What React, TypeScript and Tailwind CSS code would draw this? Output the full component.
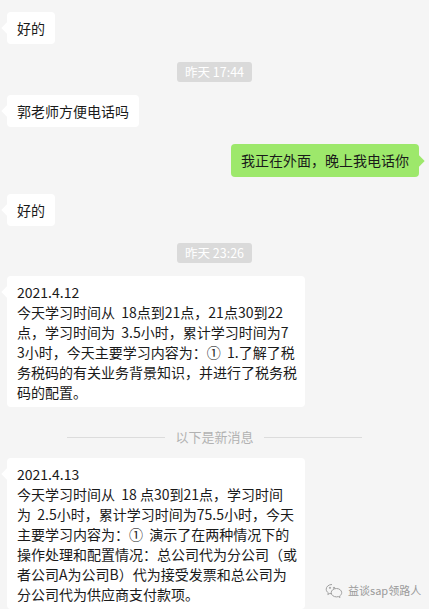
import React from "react";

const font = { fontFamily: '"Noto Sans CJK SC", "Noto Sans", sans-serif' };

function LeftBubble({ children, arrowTop = 12, className = "" }: { children: React.ReactNode; arrowTop?: number; className?: string }) {
  return (
    <div className={"relative self-start ml-[7px] bg-white rounded-[4px] text-[14px] text-[#1a1a1a] " + className}>
      <span
        className="absolute left-[-4px] w-[8px] h-[8px] bg-white rotate-45"
        style={{ top: arrowTop }}
      />
      <div className="relative">{children}</div>
    </div>
  );
}

function Stamp({ text, className = "" }: { text: string; className?: string }) {
  return (
    <div className={"self-center h-[20px] px-[8px] rounded-[3px] bg-[#dadada] text-white text-[12.5px] leading-[20px] " + className}>
      {text}
    </div>
  );
}

export default function App() {
  const msg1 = [
    "2021.4.12",
    "今天学习时间从  18点到21点，21点30到22",
    "点，学习时间为  3.5小时，累计学习时间为7",
    "3小时，今天主要学习内容为：①  1.了解了税",
    "务税码的有关业务背景知识，并进行了税务税",
    "码的配置。",
  ];
  const msg2 = [
    "2021.4.13",
    "今天学习时间从  18 点30到21点，学习时间",
    "为  2.5小时，累计学习时间为75.5小时，今天",
    "主要学习内容为：①  演示了在两种情况下的",
    "操作处理和配置情况：总公司代为分公司（或",
    "者公司A为公司B）代为接受发票和总公司为",
    "分公司代为供应商支付款项。",
  ];
  return (
    <div className="relative w-[429px] h-[609px] overflow-hidden bg-[#f5f5f5]" style={font}>
      <div className="flex flex-col pt-[12px]">
        <LeftBubble arrowTop={12}>
          <div className="h-[32px] px-[10px] leading-[32px]">好的</div>
        </LeftBubble>
        <Stamp text="昨天 17:44" className="mt-[18px]" />
        <LeftBubble arrowTop={12} className="mt-[13px]">
          <div className="h-[32px] px-[10px] leading-[32px]">郭老师方便电话吗</div>
        </LeftBubble>
        <div className="relative self-end mr-[10px] mt-[17px] bg-[#9de86b] rounded-[4px] text-[14px] text-[#1a1a1a]">
          <span className="absolute right-[-4px] top-[13px] w-[8px] h-[8px] bg-[#9de86b] rotate-45" />
          <div className="relative h-[33px] px-[10px] leading-[33px]">我正在外面，晚上我电话你</div>
        </div>
        <LeftBubble arrowTop={12} className="mt-[17px]">
          <div className="h-[32px] px-[10px] leading-[32px]">好的</div>
        </LeftBubble>
        <Stamp text="昨天 23:26" className="mt-[17px]" />
        <LeftBubble arrowTop={12} className="mt-[13px] w-[298px]">
          <div className="pl-[10px] pr-[8px] pt-[6px] pb-[5px] leading-[20px] whitespace-pre">
            {msg1.map((l, i) => (
              <div key={i}>{l}</div>
            ))}
          </div>
        </LeftBubble>
        <div className="mt-[20px] h-[20px] flex items-center justify-center gap-[10px] text-[13px] text-[#b2b2b2]">
          <div className="w-[98px] h-px bg-[#dcdcdc]" />
          <span>以下是新消息</span>
          <div className="w-[98px] h-px bg-[#dcdcdc]" />
        </div>
        <LeftBubble arrowTop={12} className="mt-[11px] w-[298px]">
          <div className="pl-[10px] pr-[8px] pt-[6px] pb-[5px] leading-[20px] whitespace-pre">
            {msg2.map((l, i) => (
              <div key={i}>{l}</div>
            ))}
          </div>
        </LeftBubble>
      </div>
      <div className="absolute left-[325px] top-[582px] flex items-center gap-[5px] text-[11px] text-[#9a9a9a]">
        <svg width="18" height="15" viewBox="0 0 18 15" fill="none" stroke="#a0a0a0" strokeWidth="1">
          <path d="M7 1.5C3.7 1.5 1.2 3.6 1.2 6.2c0 1.5.8 2.8 2.1 3.6l-.5 1.7 2-1c.7.2 1.4.3 2.2.3" />
          <path d="M11.5 5.5c-3 0-5.3 1.9-5.3 4.2s2.4 4.2 5.3 4.2c.6 0 1.2-.1 1.8-.3l1.7.9-.4-1.5c1.300-.8 2.1-2 2.1-3.3 0-2.3-2.3-4.2-5.2-4.2z" />
          <circle cx="5" cy="4.8" r=".6" fill="#a0a0a0" />
          <circle cx="9" cy="4.8" r=".6" fill="#a0a0a0" />
        </svg>
        <span>益谈sap领路人</span>
      </div>
    </div>
  );
}
